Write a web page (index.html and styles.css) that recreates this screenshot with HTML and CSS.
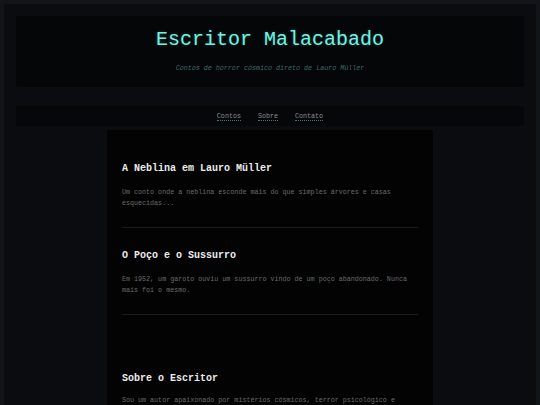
FILE: index.html
```html
<!DOCTYPE html>
<html lang="pt-BR">
<head>
<meta charset="utf-8">
<title>Escritor Malacabado</title>
<link rel="stylesheet" href="styles.css">
</head>
<body>
<div class="page">
  <header class="site-header">
    <h1 class="site-title">Escritor Malacabado</h1>
    <p class="site-subtitle">Contos de horror cósmico direto de Lauro Müller</p>
  </header>
  <nav class="site-nav">
    <a href="#contos">Contos</a>
    <a href="#sobre">Sobre</a>
    <a href="#contato">Contato</a>
  </nav>
  <main class="content">
    <section id="contos" class="stories">
      <article class="story">
        <h2 class="story-title">A Neblina em Lauro Müller</h2>
        <p class="story-text">Um conto onde a neblina esconde mais do que simples árvores e casas esquecidas...</p>
      </article>
      <article class="story">
        <h2 class="story-title">O Poço e o Sussurro</h2>
        <p class="story-text">Em 1952, um garoto ouviu um sussurro vindo de um poço abandonado. Nunca mais foi o mesmo.</p>
      </article>
    </section>
    <section id="sobre" class="about">
      <h2 class="story-title">Sobre o Escritor</h2>
      <p class="story-text about-text">Sou um autor apaixonado por mistérios cósmicos, terror psicológico e lendas locais de Santa Catarina.</p>
    </section>
  </main>
</div>
</body>
</html>
```
FILE: styles.css
```css
html, body {
  margin: 0;
  padding: 0;
}
body {
  background: #111418;
  font-family: "Courier New", Courier, "Liberation Mono", monospace;
  -webkit-font-smoothing: antialiased;
  min-height: 405px;
}
.page {
  margin: 4px;
  background: #0a0c0f;
  min-height: 600px;
  padding: 12px 12px 40px;
  display: flex;
  flex-direction: column;
}
.site-header {
  background: #050607;
  border-radius: 3px;
  padding: 12px 0 14px;
  text-align: center;
}
.site-title {
  margin: 0;
  font-weight: normal;
  font-size: 20px;
  line-height: 24px;
  color: #6ef2e6;
  text-shadow: 0 0 3px rgba(110, 242, 230, 0.25);
}
.site-subtitle {
  margin: 11px 0 0;
  font-size: 6.7px;
  line-height: 10px;
  font-style: italic;
  color: #3b6a66;
}
.site-nav {
  margin-top: 19px;
  background: #060709;
  border-radius: 3px;
  height: 20px;
  display: flex;
  justify-content: center;
  align-items: center;
  gap: 17px;
}
.site-nav a {
  font-size: 6.7px;
  line-height: 8px;
  color: #8c8c8c;
  text-decoration: none;
  border-bottom: 1px dotted #3f7a74;
}
.content {
  align-self: center;
  width: 296px;
  margin-top: 4px;
  background: #030304;
  padding: 33px 15px 40px;
}
.story {
  border-bottom: 1px solid #1b1c1e;
  padding-bottom: 19px;
  margin-bottom: 22px;
}
.story-title {
  margin: 0;
  font-size: 10px;
  line-height: 12px;
  font-weight: bold;
  color: #ececec;
}
.story-text {
  margin: 12px 0 0;
  font-size: 6.7px;
  line-height: 10.5px;
  color: #6a6a6a;
}
.about {
  padding-top: 36px;
}
.about-text {
  margin-top: 10px;
}
```
